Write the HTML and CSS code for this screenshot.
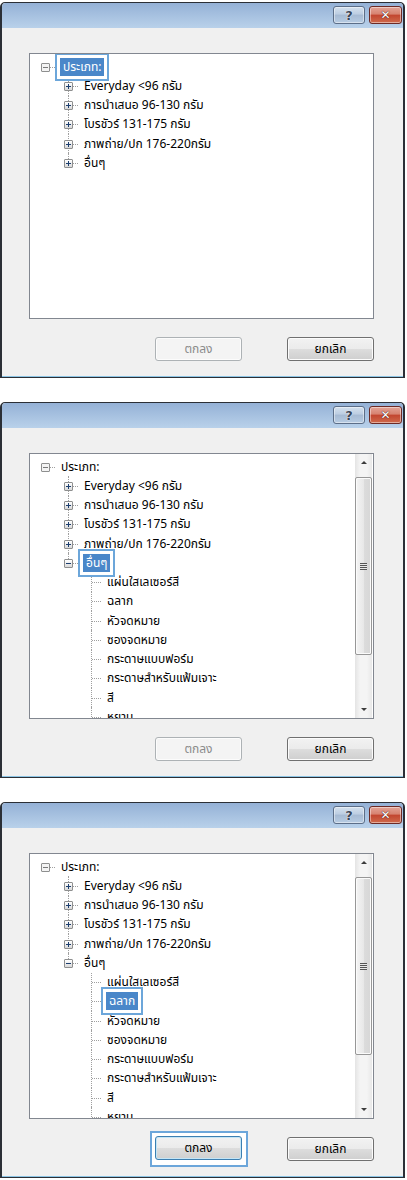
FILE: index.html
```html
<!DOCTYPE html>
<html lang="th">
<head>
  <meta charset="UTF-8">
  <title>ประเภทกระดาษ</title>
  <link rel="stylesheet" href="styles.css">
</head>
<body>

<div class="shots">

  <!-- 1: root selected -->
  <section class="dialog">
    <div class="titlebar">
      <span class="cap-btn help">?</span>
      <span class="cap-btn close">✕</span>
    </div>
    <div class="body">
      <div class="tree">
        <div class="tv">
          <div class="row root"><span class="gut"><i class="exp minus gray"></i></span><span class="label sel">ประเภท:</span></div>
          <div class="row d1"><span class="gut line"><i class="exp plus"></i></span><span class="label">Everyday &lt;96 กรัม</span></div>
          <div class="row d1"><span class="gut line"><i class="exp plus"></i></span><span class="label">การนำเสนอ 96-130 กรัม</span></div>
          <div class="row d1"><span class="gut line"><i class="exp plus"></i></span><span class="label">โบรชัวร์ 131-175 กรัม</span></div>
          <div class="row d1"><span class="gut line"><i class="exp plus"></i></span><span class="label">ภาพถ่าย/ปก 176-220กรัม</span></div>
          <div class="row d1"><span class="gut line last"><i class="exp plus"></i></span><span class="label">อื่นๆ</span></div>
        </div>
      </div>
      <div class="actions">
        <button class="btn" disabled>ตกลง</button>
        <button class="btn">ยกเลิก</button>
      </div>
    </div>
  </section>

  <!-- 2: "อื่นๆ" expanded -->
  <section class="dialog">
    <div class="titlebar">
      <span class="cap-btn help">?</span>
      <span class="cap-btn close">✕</span>
    </div>
    <div class="body">
      <div class="tree">
        <div class="tv">
          <div class="row root"><span class="gut"><i class="exp minus gray"></i></span><span class="label">ประเภท:</span></div>
          <div class="row d1"><span class="gut line"><i class="exp plus"></i></span><span class="label">Everyday &lt;96 กรัม</span></div>
          <div class="row d1"><span class="gut line"><i class="exp plus"></i></span><span class="label">การนำเสนอ 96-130 กรัม</span></div>
          <div class="row d1"><span class="gut line"><i class="exp plus"></i></span><span class="label">โบรชัวร์ 131-175 กรัม</span></div>
          <div class="row d1"><span class="gut line"><i class="exp plus"></i></span><span class="label">ภาพถ่าย/ปก 176-220กรัม</span></div>
          <div class="row d1"><span class="gut line last"><i class="exp minus"></i></span><span class="label sel">อื่นๆ</span></div>
          <div class="row d2"><span class="gut line"></span><span class="label">แผ่นใสเลเซอร์สี</span></div>
          <div class="row d2"><span class="gut line"></span><span class="label">ฉลาก</span></div>
          <div class="row d2"><span class="gut line"></span><span class="label">หัวจดหมาย</span></div>
          <div class="row d2"><span class="gut line"></span><span class="label">ซองจดหมาย</span></div>
          <div class="row d2"><span class="gut line"></span><span class="label">กระดาษแบบฟอร์ม</span></div>
          <div class="row d2"><span class="gut line"></span><span class="label">กระดาษสำหรับแฟ้มเจาะ</span></div>
          <div class="row d2"><span class="gut line"></span><span class="label">สี</span></div>
          <div class="row d2"><span class="gut line"></span><span class="label">หยาบ</span></div>
        </div>
        <div class="vscroll">
          <span class="arrow up"></span>
          <div class="track"><span class="thumb"><span class="grip"></span></span></div>
          <span class="arrow down"></span>
        </div>
      </div>
      <div class="actions">
        <button class="btn" disabled>ตกลง</button>
        <button class="btn">ยกเลิก</button>
      </div>
    </div>
  </section>

  <!-- 3: "ฉลาก" selected, OK enabled -->
  <section class="dialog">
    <div class="titlebar">
      <span class="cap-btn help">?</span>
      <span class="cap-btn close">✕</span>
    </div>
    <div class="body">
      <div class="tree">
        <div class="tv">
          <div class="row root"><span class="gut"><i class="exp minus gray"></i></span><span class="label">ประเภท:</span></div>
          <div class="row d1"><span class="gut line"><i class="exp plus"></i></span><span class="label">Everyday &lt;96 กรัม</span></div>
          <div class="row d1"><span class="gut line"><i class="exp plus"></i></span><span class="label">การนำเสนอ 96-130 กรัม</span></div>
          <div class="row d1"><span class="gut line"><i class="exp plus"></i></span><span class="label">โบรชัวร์ 131-175 กรัม</span></div>
          <div class="row d1"><span class="gut line"><i class="exp plus"></i></span><span class="label">ภาพถ่าย/ปก 176-220กรัม</span></div>
          <div class="row d1"><span class="gut line last"><i class="exp minus"></i></span><span class="label">อื่นๆ</span></div>
          <div class="row d2"><span class="gut line"></span><span class="label">แผ่นใสเลเซอร์สี</span></div>
          <div class="row d2"><span class="gut line"></span><span class="label sel">ฉลาก</span></div>
          <div class="row d2"><span class="gut line"></span><span class="label">หัวจดหมาย</span></div>
          <div class="row d2"><span class="gut line"></span><span class="label">ซองจดหมาย</span></div>
          <div class="row d2"><span class="gut line"></span><span class="label">กระดาษแบบฟอร์ม</span></div>
          <div class="row d2"><span class="gut line"></span><span class="label">กระดาษสำหรับแฟ้มเจาะ</span></div>
          <div class="row d2"><span class="gut line"></span><span class="label">สี</span></div>
          <div class="row d2"><span class="gut line"></span><span class="label">หยาบ</span></div>
        </div>
        <div class="vscroll">
          <span class="arrow up"></span>
          <div class="track"><span class="thumb"><span class="grip"></span></span></div>
          <span class="arrow down"></span>
        </div>
      </div>
      <div class="actions">
        <span class="callout"><button class="btn focus">ตกลง</button></span>
        <button class="btn">ยกเลิก</button>
      </div>
    </div>
  </section>

</div>

</body>
</html>
```

FILE: styles.css
```css
body {
  margin: 0;
  background: #ffffff;
  font-family: Tahoma, "Noto Sans Thai", "Noto Sans", "DejaVu Sans", sans-serif;
  font-size: 12px;
  color: #000000;
}

.shots {
  display: flex;
  flex-direction: column;
  gap: 24px;
  padding-top: 2px;
}

/* Window frame */
.dialog {
  width: 405px;
  height: 376px;
  box-sizing: border-box;
  border: 1px solid #2b2f36;
  border-left-width: 2px;
  border-right-width: 2px;
  border-radius: 5px 5px 0 0;
  background: #f0f0f0;
  display: flex;
  flex-direction: column;
  box-shadow: inset 0 -1px 0 #8cc4e4;
}

.titlebar {
  height: 25px;
  flex: none;
  background: linear-gradient(#94b1d6, #b9d1ea);
  border-radius: 4px 4px 0 0;
  display: flex;
  justify-content: flex-end;
  align-items: flex-start;
  gap: 4px;
  padding: 3px 1px 0 0;
  box-sizing: border-box;
}

.cap-btn {
  height: 18px;
  box-sizing: border-box;
  border: 1px solid #5c6e88;
  border-radius: 3px;
  display: flex;
  align-items: center;
  justify-content: center;
  font-family: "DejaVu Sans", sans-serif;
  font-weight: bold;
  box-shadow: inset 0 0 0 1px rgba(255, 255, 255, 0.45);
}

.help {
  width: 32px;
  background: linear-gradient(#d5e1ee 0%, #bccde2 45%, #a6bad3 50%, #b7cce3 100%);
  font-size: 13px;
  color: #3a4658;
  text-shadow: 0 0 1px #ffffff, 0 0 1px #ffffff;
}

.close {
  width: 33px;
  border-color: #6d2a25;
  background: linear-gradient(#e3a396 0%, #d7826f 45%, #c2452f 50%, #cf6a4c 100%);
  font-size: 12px;
  color: #ffffff;
  text-shadow: 0 0 1px #4a1410, 0 0 1px #4a1410;
}

.body {
  flex: 1;
  display: flex;
  flex-direction: column;
  padding: 25px 29px 16px 27px;
}

/* Tree view */
.tree {
  height: 266px;
  box-sizing: border-box;
  border: 1px solid #828790;
  background: #ffffff;
  display: flex;
  overflow: hidden;
}

.tv {
  flex: 1;
  padding: 3px 0 0 6px;
  overflow: hidden;
}

.row {
  height: 19.25px;
  display: flex;
  align-items: center;
  white-space: nowrap;
}

.row.d1 { padding-left: 23px; }
.row.d2 { padding-left: 46px; }

.gut {
  position: relative;
  width: 23px;
  height: 100%;
  flex: none;
  display: flex;
  align-items: center;
}

.gut::after {
  content: "";
  position: absolute;
  left: 10px;
  top: 50%;
  width: 9px;
  border-top: 1px dotted #a0a0a0;
}

.gut.line::before {
  content: "";
  position: absolute;
  left: 9px;
  top: 0;
  bottom: 0;
  border-left: 1px dotted #a0a0a0;
}

.gut.line.last::before {
  bottom: 50%;
}

.exp {
  position: relative;
  z-index: 1;
  width: 9px;
  height: 9px;
  margin-left: 5px;
  margin-top: 1px;
  box-sizing: border-box;
  border: 1px solid #8e8f8f;
  border-radius: 1px;
  background: linear-gradient(#ffffff, #d9d9d9);
}

.exp::before,
.exp::after {
  content: "";
  position: absolute;
  background: #1c3e6e;
}

.exp::before {
  left: 1px;
  top: 3px;
  width: 5px;
  height: 1px;
}

.exp.plus::after {
  left: 3px;
  top: 1px;
  width: 1px;
  height: 5px;
}

.exp.gray {
  background: #f4f4f4;
}

.exp.gray::before {
  background: #7a7a7a;
}

.label {
  margin-left: 1px;
  line-height: 16px;
  padding: 0 1px;
}

/* callout around the selected item */
.label.sel {
  background: #4a87c9;
  color: #ffffff;
  padding: 1px 3px;
  box-shadow: 0 0 0 3px #ffffff, 0 0 0 5px #6ca6da;
  position: relative;
  z-index: 2;
}

/* Scrollbar */
.vscroll {
  width: 17px;
  flex: none;
  margin-right: 1px;
  display: flex;
  flex-direction: column;
  background: linear-gradient(to right, #e4e4e4, #f4f4f4 30%, #f4f4f4 70%, #e8e8e8);
}

.arrow {
  height: 17px;
  flex: none;
  display: flex;
  align-items: center;
  justify-content: center;
}

.arrow::before {
  content: "";
  border-left: 3px solid transparent;
  border-right: 3px solid transparent;
}

.arrow.up::before {
  border-bottom: 3px solid #3b3b3b;
}

.arrow.down::before {
  border-top: 3px solid #3b3b3b;
}

.track {
  flex: 1;
  padding-top: 6px;
}

.thumb {
  display: flex;
  align-items: center;
  justify-content: center;
  height: 178px;
  box-sizing: border-box;
  border: 1px solid #979797;
  border-radius: 2px;
  background: linear-gradient(to right, #f4f4f4, #e8e8e8 50%, #dcdcdc 51%, #d6d6d6);
  box-shadow: inset 0 0 0 1px #fbfbfb;
}

.grip {
  width: 7px;
  height: 7px;
  background: repeating-linear-gradient(#555 0 1px, #e8e8e8 1px 2px);
}

/* Buttons */
.actions {
  display: flex;
  justify-content: flex-end;
  align-items: flex-start;
  gap: 45px;
  margin-top: 18px;
}

.btn {
  width: 87px;
  height: 24px;
  font-family: inherit;
  font-size: 12px;
  color: #000000;
  border: 1px solid #707070;
  border-radius: 3px;
  background: linear-gradient(#f2f2f2 0%, #ebebeb 49%, #dddddd 50%, #cfcfcf 100%);
  box-shadow: inset 0 0 0 1px #fcfcfc;
  padding: 0;
  display: block;
}

.btn:disabled {
  color: #8b8b8b;
  border-color: #adb2b5;
  background: #f4f4f4;
}

/* square callout frame around the focused button */
.callout {
  display: block;
  margin: -6px -6px -7px -5px;
  padding: 3px 4px 5px 3px;
  border: 2px solid #6ca6da;
  background: #ffffff;
}

.btn.focus {
  border-color: #3c7fb1;
  box-shadow: inset 0 0 0 1px #c4e5f6;
}
```
